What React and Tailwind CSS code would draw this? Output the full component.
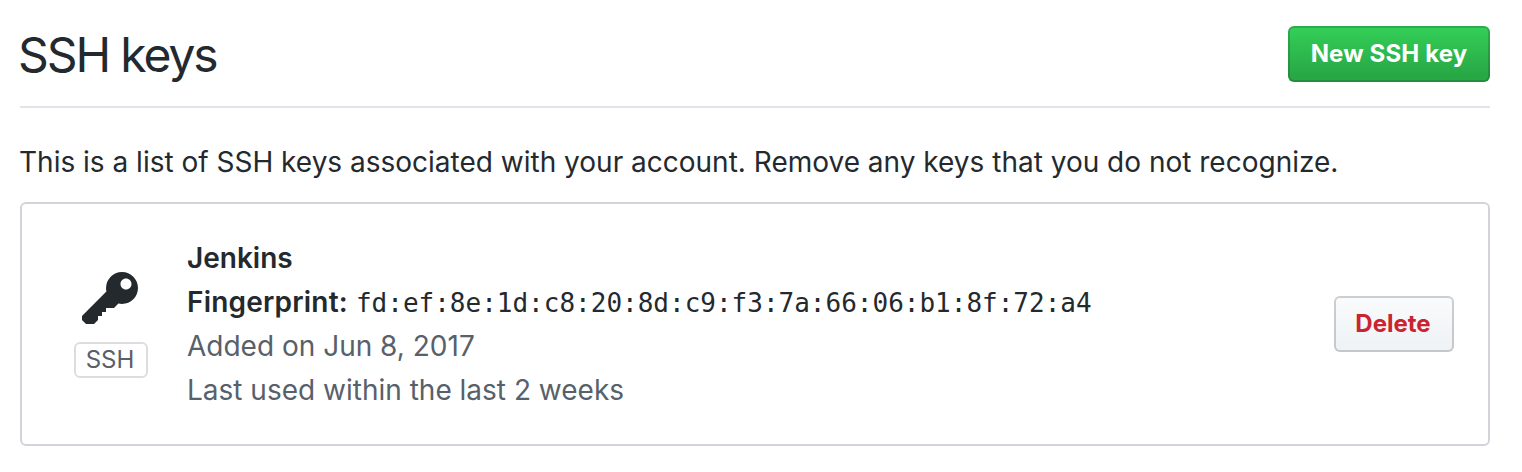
function KeyIcon() {
  return (
    <svg viewBox="0 0 14 16" className="h-16 w-14" fill="currentColor" aria-hidden="true">
      <path d="M12.83 2.17C12.08 1.42 11.14 1.03 10 1c-1.13.03-2.08.42-2.83 1.17S6.04 3.86 6.01 5c0 .3.03.59.09.89L0 12v1l1 1h2l1-1v-1h1v-1h1v-1h2l1.09-1.11c.3.08.59.11.91.11 1.14-.03 2.08-.42 2.83-1.17S13.97 6.14 14 5c-.03-1.14-.42-2.08-1.17-2.83zM11 5.38c-.77 0-1.38-.61-1.38-1.38 0-.77.61-1.38 1.38-1.38.77 0 1.38.61 1.38 1.38 0 .77-.61 1.38-1.38 1.38z" />
    </svg>
  );
}

export default function App() {
  return (
    <main className="h-[472px] w-[1522px] overflow-hidden bg-white pt-[26px] pr-8 pl-5 font-['Inter',sans-serif] text-[#24292e]">
      <header className="flex h-[82px] items-start justify-between border-b-2 border-[#e1e4e8]">
        <h1 className="-ml-0.5 text-[48px] leading-[58px] tracking-[-2.1px]">SSH keys</h1>
        <button className="h-14 w-[202px] rounded-md border-2 border-[rgba(27,31,35,0.2)] bg-linear-to-b from-[#34d058] to-[#28a745] to-90% bg-origin-border text-[24px] font-bold tracking-[0.15px] text-white">
          New SSH key
        </button>
      </header>
      <p className="mt-8 -ml-px h-[62px] text-[28px] leading-[44px] whitespace-nowrap">
        This is a list of SSH keys associated with your account. Remove any keys that you do not recognize.
      </p>
      <section className="flex h-[244px] items-center rounded-md border-2 border-[#d1d5da] pr-[34px] pl-[52px]">
        <div className="flex w-[74px] flex-col items-center">
          <div className="-mt-0.5 mr-2.5 ml-2">
            <KeyIcon />
          </div>
          <span className="mt-2.5 flex h-9 w-[74px] items-center justify-center rounded-md border-2 border-[#dddddd] pr-0.5 text-[24px] text-[#586069]">
            SSH
          </span>
        </div>
        <div className="ml-[39px] grow text-[28px] leading-[44px]">
          <div className="h-11"><strong className="font-semibold">Jenkins</strong></div>
          <div className="flex h-11">
            <strong className="font-semibold tracking-[0.2px]">Fingerprint:</strong>
            <code className="ml-2 pt-px font-['DejaVu_Sans_Mono',monospace] text-[26px]">fd:ef:8e:1d:c8:20:8d:c9:f3:7a:66:06:b1:8f:72:a4</code>
          </div>
          <div className="h-11 text-[#586069]">Added on Jun 8, 2017</div>
          <div className="h-11 text-[#586069]">Last used within the last 2 weeks</div>
        </div>
        <button className="h-14 w-[120px] rounded-md border-2 border-[rgba(27,31,35,0.2)] bg-linear-to-b from-[#fafbfc] to-[#eff3f6] to-90% bg-origin-border pr-0.5 text-[24px] font-bold text-[#cb2431]">
          Delete
        </button>
      </section>
    </main>
  );
}
